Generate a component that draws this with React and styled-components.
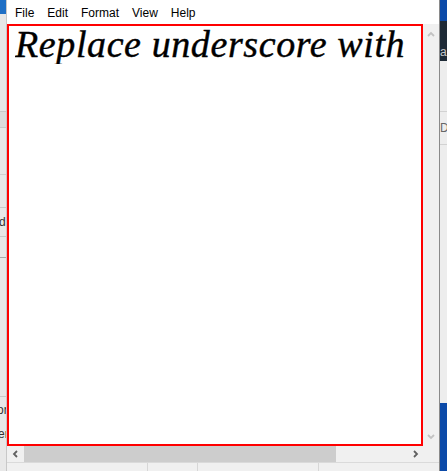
import React from "react";
import styled, { createGlobalStyle } from "styled-components";

const Global = createGlobalStyle`
  html, body { margin: 0; padding: 0; background: #ffffff; }
  body { font-family: "Liberation Sans", Arial, sans-serif; }
`;

const Screen = styled.div`
  width: 447px;
  height: 471px;
  display: flex;
  overflow: hidden;
  background: #f0f0f0;
`;

// bits of the windows behind notepad
const LeftBack = styled.div`
  width: 7px;
  display: flex;
  flex-direction: column;
  background: #e4e4e4;
  border-right: 1px solid #c8c8c8;
  box-sizing: border-box;
  overflow: hidden;
`;

const RightBack = styled.div`
  width: 7px;
  display: flex;
  flex-direction: column;
  background: #ececec;
  border-left: 1px solid #8a8a8a;
  overflow: hidden;
`;

const BackBand = styled.div`
  height: ${(p) => p.h}px;
  flex: ${(p) => (p.grow ? 1 : "none")};
  background: ${(p) => p.bg || "transparent"};
  border-bottom: ${(p) => (p.line ? `1px solid ${p.line}` : "none")};
  color: ${(p) => p.fg || "#444"};
  font-size: 12px;
  line-height: ${(p) => p.lh || p.h}px;
  white-space: nowrap;
  text-indent: ${(p) => p.indent || 0}px;
  box-sizing: border-box;
`;

const Window = styled.div`
  width: 432px;
  display: flex;
  flex-direction: column;
  background: #f0f0f0;
`;

const MenuBar = styled.div`
  height: 24px;
  display: flex;
  align-items: center;
  background: #ffffff;
  padding-left: 2px;
  font-family: "Liberation Sans", Arial, sans-serif;
  font-size: 12px;
  color: #000;
`;

const MenuItem = styled.div`
  padding: 0 7px 0 6px;
  line-height: 24px;
  margin-top: 1px;
`;

const Body = styled.div`
  display: flex;
  height: 422px;
`;

const Editor = styled.div`
  width: 416px;
  height: 422px;
  border: 2px solid #ff0000;
  box-sizing: border-box;
  background: #ffffff;
  overflow: hidden;
  padding: 0 0 0 6px;
`;

const BigText = styled.div`
  font-family: "Liberation Serif", "Times New Roman", serif;
  font-style: italic;
  font-size: 38px;
  letter-spacing: 0.6px;
  line-height: 40px;
  margin-top: -2px;
  color: #000;
  -webkit-text-stroke: 0.4px #000;
  white-space: nowrap;
  width: 399px;
  overflow: hidden;
`;

const VScroll = styled.div`
  width: 16px;
  display: flex;
  flex-direction: column;
  justify-content: space-between;
  align-items: center;
  background: #f0f0f0;
  padding: 7px 0 6px;
  box-sizing: border-box;
`;

const HScrollRow = styled.div`
  height: 16px;
  display: flex;
  align-items: center;
  background: #f0f0f0;
`;

const ArrowBox = styled.div`
  width: ${(p) => p.w}px;
  display: flex;
  justify-content: center;
  align-items: center;
`;

const Track = styled.div`
  flex: 1;
  height: 16px;
  display: flex;
`;

const Thumb = styled.div`
  width: 312px;
  height: 16px;
  background: #cdcdcd;
`;

const StatusBar = styled.div`
  flex: 1;
  display: flex;
  border-top: 1px solid #dadada;
  background: #f0f0f0;
`;

const StatusCell = styled.div`
  width: ${(p) => p.w}px;
  flex: ${(p) => (p.grow ? 1 : "none")};
  border-right: ${(p) => (p.sep ? "1px solid #d7d7d7" : "none")};
  box-sizing: border-box;
`;

const Chevron = ({ dir, color }) => {
  const paths = {
    up: "M1 5 L4 2 L7 5",
    down: "M1 2 L4 5 L7 2",
    left: "M5 1 L2 4 L5 7",
    right: "M2 1 L5 4 L2 7",
  };
  const vert = dir === "up" || dir === "down";
  return (
    <svg width={vert ? 8 : 7} height={vert ? 7 : 8} viewBox={vert ? "0 0 8 7" : "0 0 7 8"}>
      <path d={paths[dir]} fill="none" stroke={color} strokeWidth="1.8" />
    </svg>
  );
};

export default function App() {
  return (
    <>
      <Global />
      <Screen>
        <LeftBack>
          <BackBand h={14} bg="#1f6fc5" />
          <BackBand h={98} bg="#e6e6e6" line="#c9c9c9" />
          <BackBand h={16} bg="#dcdcdc" line="#c9c9c9" />
          <BackBand h={47} bg="#e8e8e8" line="#d0d0d0" />
          <BackBand h={33} bg="#e8e8e8" line="#c9c9c9" />
          <BackBand h={29} bg="#e8e8e8" line="#c9c9c9" fg="#333" indent={-1}>
            d
          </BackBand>
          <BackBand h={21} bg="#e8e8e8" line="#a8a8a8" />
          <BackBand h={139} bg="#e8e8e8" line="#c9c9c9" />
          <BackBand h={26} bg="#e8e8e8" fg="#333" indent={-3}>
            or
          </BackBand>
          <BackBand h={22} bg="#e8e8e8" fg="#333" indent={-2}>
            er
          </BackBand>
          <BackBand grow bg="#e8e8e8" />
        </LeftBack>

        <Window>
          <MenuBar>
            <MenuItem>File</MenuItem>
            <MenuItem>Edit</MenuItem>
            <MenuItem>Format</MenuItem>
            <MenuItem>View</MenuItem>
            <MenuItem>Help</MenuItem>
          </MenuBar>

          <Body>
            <Editor>
              <BigText>Replace underscore with _</BigText>
            </Editor>
            <VScroll>
              <Chevron dir="up" color="#c2c2c2" />
              <Chevron dir="down" color="#c2c2c2" />
            </VScroll>
          </Body>

          <HScrollRow>
            <ArrowBox w={17}>
              <Chevron dir="left" color="#606060" />
            </ArrowBox>
            <Track>
              <Thumb />
            </Track>
            <ArrowBox w={16}>
              <Chevron dir="right" color="#606060" />
            </ArrowBox>
            <ArrowBox w={16} />
          </HScrollRow>

          <StatusBar>
            <StatusCell w={141} sep />
            <StatusCell w={50} sep />
            <StatusCell w={121} sep />
            <StatusCell grow />
          </StatusBar>
        </Window>

        <RightBack>
          <BackBand h={21} bg="#0b4aa8" />
          <BackBand h={40} bg="#1e2a36" fg="#c8c8c8" lh={62}>
            a
          </BackBand>
          <BackBand h={51} bg="#ededed" line="#d2d2d2" />
          <BackBand h={33} bg="#ededed" line="#d2d2d2" fg="#666">
            D
          </BackBand>
          <BackBand h={258} bg="#ededed" />
          <BackBand grow bg="#0b4aa8" />
        </RightBack>
      </Screen>
    </>
  );
}
